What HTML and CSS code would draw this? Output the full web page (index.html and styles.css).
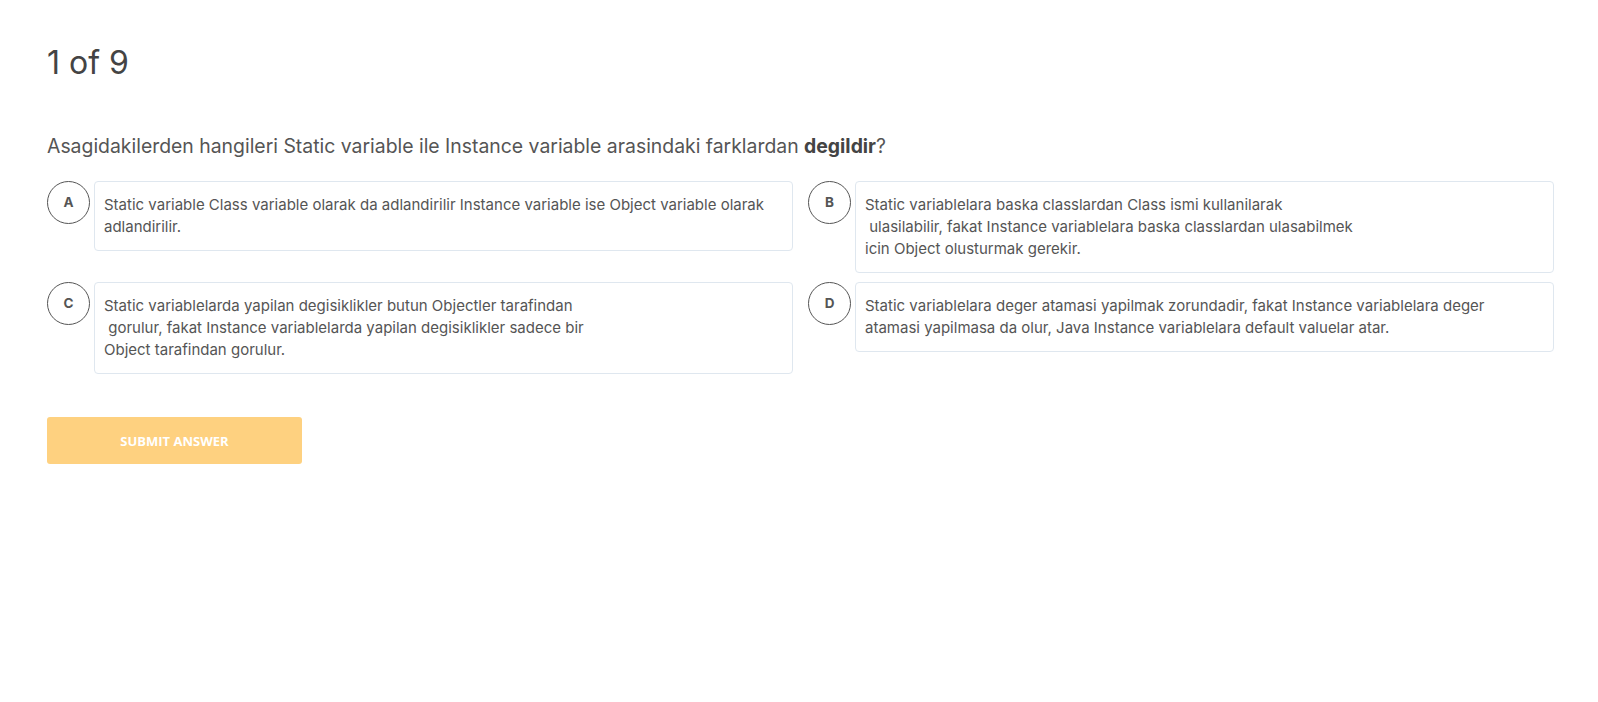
FILE: index.html
```html
<!DOCTYPE html>
<html>
<head>
<meta charset="utf-8">
<link rel="stylesheet" href="styles.css">
</head>
<body>
<main class="quiz">
  <h1 class="counter">1 of 9</h1>
  <p class="question">Asagidakilerden hangileri Static variable ile Instance variable arasindaki farklardan <b>degildir</b>?</p>
  <div class="options">
    <div class="option">
      <span class="letter">A</span>
      <div class="answer">Static variable Class variable olarak da adlandirilir Instance variable ise Object variable olarak adlandirilir.</div>
    </div>
    <div class="option">
      <span class="letter">B</span>
      <div class="answer">Static variablelara baska classlardan Class ismi kullanilarak<br>&nbsp;ulasilabilir, fakat Instance variablelara baska classlardan ulasabilmek<br>icin Object olusturmak gerekir.</div>
    </div>
    <div class="option">
      <span class="letter">C</span>
      <div class="answer">Static variablelarda yapilan degisiklikler butun Objectler tarafindan<br>&nbsp;gorulur, fakat Instance variablelarda yapilan degisiklikler sadece bir<br>Object tarafindan gorulur.</div>
    </div>
    <div class="option">
      <span class="letter">D</span>
      <div class="answer">Static variablelara deger atamasi yapilmak zorundadir, fakat Instance variablelara deger atamasi yapilmasa da olur, Java Instance variablelara default valuelar atar.</div>
    </div>
  </div>
  <button class="submit" type="button">SUBMIT ANSWER</button>
</main>
</body>
</html>
```

FILE: styles.css
```css
html, body {
  margin: 0;
  padding: 0;
  background: #fff;
}

body {
  font-family: Inter, "Noto Sans", sans-serif;
  color: #555;
}

.quiz {
  width: 1507px;
  padding: 44px 0 0 47px;
}

.counter {
  margin: 0;
  font-size: 32px;
  line-height: 38px;
  font-weight: 400;
  color: #444;
}

.question {
  margin: 51px 0 0;
  font-size: 19.4px;
  line-height: 26px;
  color: #555;
}

.question b {
  font-weight: 700;
  color: #444;
}

.options {
  margin-top: 22px;
  display: grid;
  grid-template-columns: 1fr 1fr;
  column-gap: 15px;
  row-gap: 9px;
  align-items: start;
}

.option {
  display: flex;
  align-items: flex-start;
  gap: 4px;
}

.letter {
  flex: 0 0 auto;
  width: 41px;
  height: 41px;
  border: 1px solid #555;
  border-radius: 50%;
  display: flex;
  align-items: center;
  justify-content: center;
  font-size: 13.5px;
  font-weight: 700;
  color: #555;
  line-height: 1;
}

.answer {
  flex: 1 1 auto;
  border: 1px solid #dfe7ef;
  border-radius: 4px;
  padding: 12px 18px 12px 9px;
  font-size: 15px;
  line-height: 22px;
  color: #555;
}

.submit {
  margin-top: 43px;
  width: 255px;
  height: 47px;
  border: none;
  border-radius: 3px;
  background: #fed180;
  color: #fff;
  font-family: "Open Sans", sans-serif;
  font-size: 13px;
  font-weight: 700;
  cursor: pointer;
}
```
